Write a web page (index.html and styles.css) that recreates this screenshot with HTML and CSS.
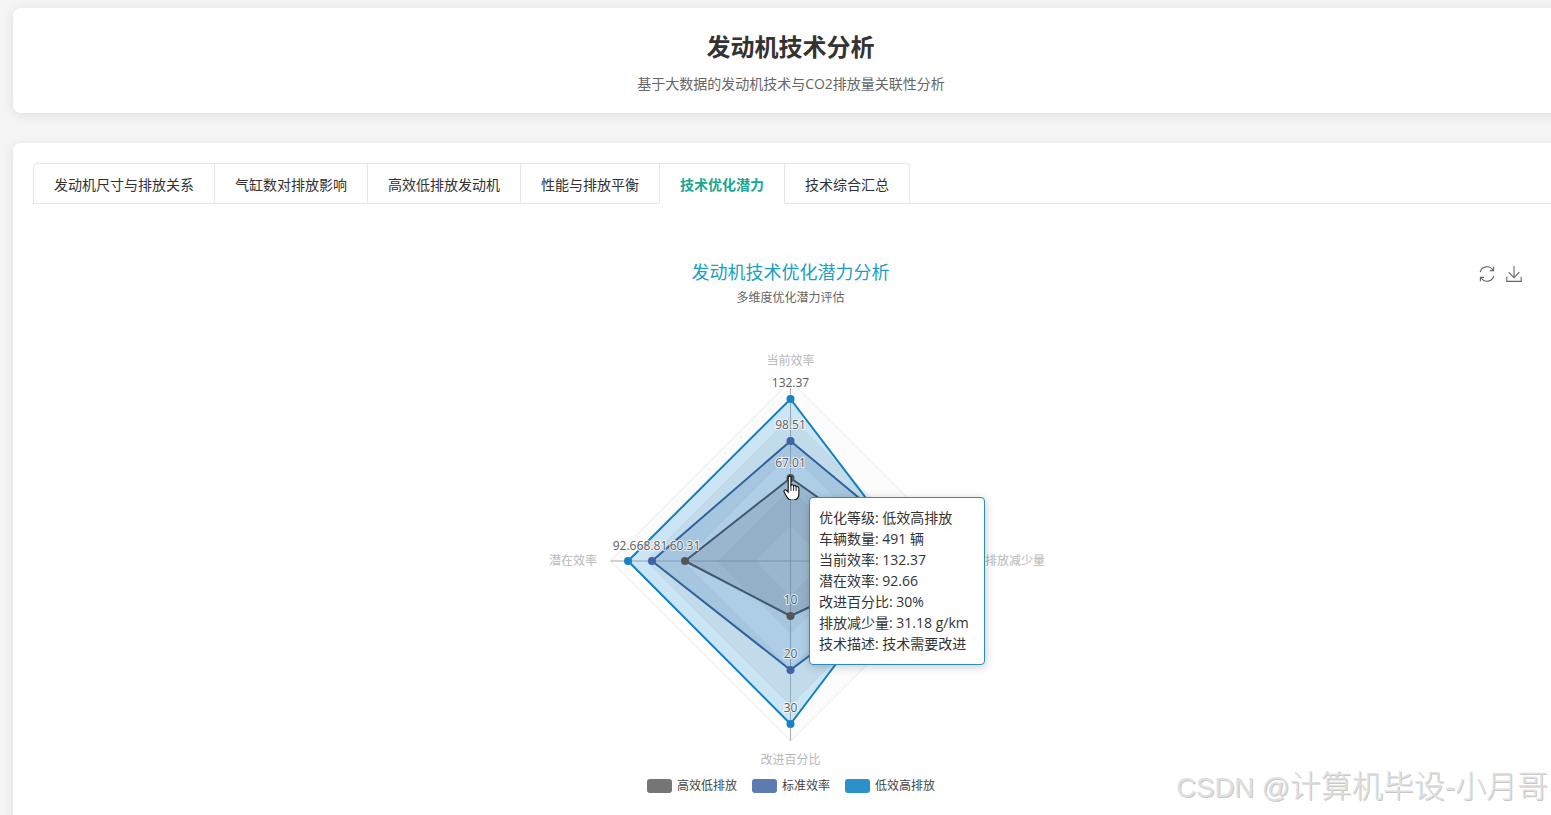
FILE: index.html
```html
<!DOCTYPE html>
<html lang="zh-CN">
<head>
<meta charset="utf-8">
<title>发动机技术分析</title>
<link rel="stylesheet" href="styles.css">
</head>
<body>
<div class="page">
  <header class="card header-card">
    <h1 class="page-title">发动机技术分析</h1>
    <p class="page-sub">基于大数据的发动机技术与CO2排放量关联性分析</p>
  </header>
  <main class="card main-card">
    <nav class="tabs">
      <div class="tab">发动机尺寸与排放关系</div>
      <div class="tab">气缸数对排放影响</div>
      <div class="tab">高效低排放发动机</div>
      <div class="tab">性能与排放平衡</div>
      <div class="tab tab-active">技术优化潜力</div>
      <div class="tab">技术综合汇总</div>
    </nav>
    <section class="chart">
      <div class="chart-head">
        <div class="chart-title">发动机技术优化潜力分析</div>
        <div class="chart-sub">多维度优化潜力评估</div>
        <div class="toolbox">
          <svg class="tool" viewBox="0 0 18 18" fill="none" stroke="#666" stroke-width="1.1">
            <path d="M2.2 7.2A7 7 0 0 1 15 5.2"/>
            <path d="M15.6 1.8V5.6H11.8"/>
            <path d="M15.8 10.8A7 7 0 0 1 3 12.8"/>
            <path d="M2.4 16.2V12.4H6.2"/>
          </svg>
          <svg class="tool" viewBox="0 0 18 18" fill="none" stroke="#666" stroke-width="1.1">
            <path d="M9 1V12.4"/>
            <path d="M3.6 7.2L9 12.6L14.4 7.2"/>
            <path d="M1.8 11.8V16.4H16.2V11.8"/>
          </svg>
        </div>
      </div>
      <svg class="radar" viewBox="33 345 1515 425">
        <g>
          <polygon class="ring-l" points="790.5,381 970.5,561 790.5,741 610.5,561"/>
          <polygon class="ring-d" points="790.5,417 934.5,561 790.5,705 646.5,561"/>
          <polygon class="ring-l" points="790.5,453 898.5,561 790.5,669 682.5,561"/>
          <polygon class="ring-d" points="790.5,489 862.5,561 790.5,633 718.5,561"/>
          <polygon class="ring-l" points="790.5,525 826.5,561 790.5,597 754.5,561"/>
          <line class="axis" x1="790.5" y1="381" x2="790.5" y2="741"/>
          <line class="axis" x1="610.5" y1="561" x2="970.5" y2="561"/>
        </g>
        <polygon class="s3" points="790.5,399 914,561 790.5,724 628,561"/>
        <polygon class="s2" points="790.5,441 935,561 790.5,670 652,561"/>
        <polygon class="s1" points="790.5,478 908,561 790.5,616 685,561"/>
        <g class="dots3"><circle cx="790.5" cy="399" r="4"/><circle cx="790.5" cy="724" r="4"/><circle cx="628" cy="561" r="4"/></g>
        <g class="dots2"><circle cx="790.5" cy="441" r="4"/><circle cx="790.5" cy="670" r="4"/><circle cx="652" cy="561" r="4"/></g>
        <g class="dots1"><circle cx="790.5" cy="478" r="4"/><circle cx="790.5" cy="616" r="4"/><circle cx="685" cy="561" r="4"/></g>
        <g class="val">
          <text x="790.5" y="387">132.37</text>
          <text x="790.5" y="429">98.51</text>
          <text x="790.5" y="467">67.01</text>
          <text x="628" y="550">92.66</text>
          <text x="652" y="550">68.81</text>
          <text x="685" y="550">60.31</text>
          <text x="790.5" y="604">10</text>
          <text x="790.5" y="658">20</text>
          <text x="790.5" y="712">30</text>
        </g>
        <g class="name">
          <text x="790.5" y="365">当前效率</text>
          <text x="1015" y="565">排放减少量</text>
          <text x="790.5" y="764">改进百分比</text>
          <text x="573" y="565">潜在效率</text>
        </g>
      </svg>
      <div class="legend">
        <div class="legend-item"><span class="swatch sw1"></span>高效低排放</div>
        <div class="legend-item"><span class="swatch sw2"></span>标准效率</div>
        <div class="legend-item"><span class="swatch sw3"></span>低效高排放</div>
      </div>
      <div class="tooltip">
        <div>优化等级: 低效高排放</div>
        <div>车辆数量: 491 辆</div>
        <div>当前效率: 132.37</div>
        <div>潜在效率: 92.66</div>
        <div>改进百分比: 30%</div>
        <div>排放减少量: 31.18 g/km</div>
        <div>技术描述: 技术需要改进</div>
      </div>
      <svg class="cursor" viewBox="0 0 15 22">
        <path d="M4.6 2.2C4.6 .6 7 .6 7 2.2V9C7.8 8.2 9 8.4 9.4 9.4C10.2 8.8 11.4 9.2 11.6 10.2C12.6 9.8 14 10.4 14 11.8V16.4C14 19.6 12.4 22 9.4 22H7.4C5.2 22 4 20.6 3 18.8L1 15C.4 13.6 2 12.4 3.2 13.6L4.6 15Z" fill="#fff" stroke="#111" stroke-width="1"/>
        <path d="M7 9V14M9.4 9.4V14M11.6 10.2V14" fill="none" stroke="#111" stroke-width=".8"/>
      </svg>
    </section>
  </main>
</div>
<div class="watermark"><span class="wm-latin">CSDN @</span>计算机毕设-小月哥</div>
</body>
</html>
```

FILE: styles.css
```css
* { box-sizing: border-box; }
html, body {
  margin: 0;
  height: 815px;
  overflow: hidden;
  background: #f5f5f5;
}
body {
  position: relative;
  font-family: "Open Sans", "Noto Sans CJK SC", sans-serif;
  color: #333;
}
.page {
  width: 1568px;
  padding: 8px 0 0 13px;
}
.card {
  background: #fff;
  border-radius: 8px;
  box-shadow: 0 2px 12px rgba(0, 0, 0, .1);
}
.header-card {
  height: 105px;
  padding-top: 22px;
  text-align: center;
}
.page-title {
  margin: 0;
  font-size: 24px;
  line-height: 34px;
  font-weight: 700;
  color: #333;
}
.page-sub {
  margin: 10px 0 0;
  padding-left: 1px;
  font-size: 14px;
  line-height: 20px;
  color: #666;
}
.main-card {
  margin-top: 30px;
  height: 700px;
  padding: 20px;
}
.tabs {
  display: flex;
  height: 41px;
  margin-right: -20px;
  border-bottom: 1px solid #e4e7ed;
}
.tab {
  height: 41px;
  padding: 0 20px;
  font-size: 14px;
  line-height: 42px;
  font-weight: 400;
  color: #303133;
  background: #fff;
  border: 1px solid #e4e7ed;
  border-left: 0;
}
.tab:first-child {
  border-left: 1px solid #e4e7ed;
  border-top-left-radius: 4px;
}
.tab:last-child {
  border-top-right-radius: 4px;
}
.tab-active {
  color: #1aa68f;
  font-weight: 700;
  border-bottom-color: #fff;
  border-left: 1px solid #e4e7ed;
  margin-left: -1px;
}
.chart {
  position: relative;
  padding-top: 56px;
}
.chart-head {
  position: relative;
  height: 44px;
  text-align: center;
}
.chart-title {
  font-size: 18px;
  line-height: 24px;
  color: #1a9fc0;
}
.chart-sub {
  margin-top: 5px;
  font-size: 12px;
  line-height: 17px;
  color: #666;
}
.toolbox {
  position: absolute;
  top: 5px;
  right: 25px;
  display: flex;
  gap: 9px;
}
.tool {
  display: block;
  width: 18px;
  height: 18px;
}
.radar {
  display: block;
  width: 1515px;
  height: 425px;
  margin-top: 41px;
}
.ring-l { fill: #fcfcfc; stroke: #e8e8e8; stroke-width: 1; }
.ring-d { fill: #efefef; stroke: #e8e8e8; stroke-width: 1; }
.axis { stroke: #aaa; stroke-width: 1; }
.s1, .s2, .s3 { stroke-width: 2; stroke-linejoin: round; }
.s3 { fill: rgba(70, 165, 220, .27); stroke: #0f7fbd; }
.s2 { fill: rgba(75, 125, 185, .22); stroke: #2f639f; }
.s1 { fill: rgba(95, 115, 135, .26); stroke: #41586f; }
.dots3 { fill: #1683c6; }
.dots2 { fill: #3f63a4; }
.dots1 { fill: #555; }
.val text {
  font-size: 12px;
  fill: #5c5c5c;
  text-anchor: middle;
  stroke: rgba(255, 255, 255, .75);
  stroke-width: 2px;
  paint-order: stroke;
}
.name text {
  font-size: 12px;
  fill: #b8b8b8;
  text-anchor: middle;
}
.legend {
  display: flex;
  justify-content: center;
  gap: 15px;
  margin-top: 9px;
  padding-left: 1px;
}
.legend-item {
  display: flex;
  align-items: center;
  gap: 5px;
  font-size: 12px;
  line-height: 14px;
  color: #444;
}
.swatch {
  display: block;
  width: 25px;
  height: 14px;
  border-radius: 3px;
}
.sw1 { background: #757575; }
.sw2 { background: #5f7aae; }
.sw3 { background: #2c91cb; }
.tooltip {
  position: absolute;
  left: 776px;
  top: 293px;
  width: 176px;
  height: 168px;
  padding: 9px 9px;
  background: #fff;
  border: 1px solid #2b8cbe;
  border-radius: 4px;
  box-shadow: 1px 2px 10px rgba(0, 0, 0, .2);
  font-size: 14px;
  line-height: 21px;
  color: #333;
  white-space: nowrap;
}
.cursor {
  position: absolute;
  left: 750px;
  top: 271px;
  width: 17px;
  height: 25px;
}
.watermark {
  position: absolute;
  right: 3px;
  top: 767px;
  font-family: "Liberation Sans", "Noto Sans CJK SC", sans-serif;
  font-size: 31px;
  font-weight: 300;
  line-height: 40px;
  color: #e0e0e0;
  text-shadow: 1px 1px 0 #c8c8c8;
  white-space: nowrap;
}
.wm-latin {
  font-size: 27.5px;
}
```
